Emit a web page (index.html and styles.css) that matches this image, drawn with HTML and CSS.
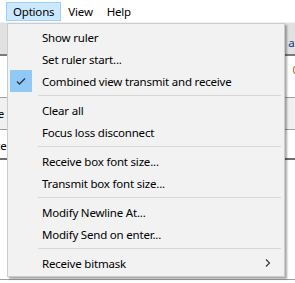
FILE: index.html
```html
<!DOCTYPE html>
<html>
<head>
<meta charset="utf-8">
<link rel="stylesheet" href="styles.css">
</head>
<body>
<div class="app">
  <div class="menubar">
    <span class="mb-item active">Options</span>
    <span class="mb-item">View</span>
    <span class="mb-item">Help</span>
  </div>
  <div class="workspace">
    <div class="row r1"><span class="r-right">ar</span></div>
    <div class="row r2"><span class="r-right zero">0</span></div>
    <div class="row r3"><span class="r-left">le</span></div>
    <div class="row r4"><span class="r-left">ce</span></div>
    <div class="row r5"></div>
  </div>

  <div class="popup">
    <div class="item"><span class="label">Show ruler</span></div>
    <div class="item"><span class="label">Set ruler start...</span></div>
    <div class="item checked"><span class="check"><svg width="22" height="22" viewBox="0 0 22 22"><path d="M7 11.5 L9.5 14 L15 8.5" fill="none" stroke="#333" stroke-width="1.3"/></svg></span><span class="label">Combined view transmit and receive</span></div>
    <div class="sep"></div>
    <div class="item"><span class="label">Clear all</span></div>
    <div class="item"><span class="label">Focus loss disconnect</span></div>
    <div class="sep"></div>
    <div class="item"><span class="label">Receive box font size...</span></div>
    <div class="item"><span class="label">Transmit box font size...</span></div>
    <div class="sep"></div>
    <div class="item"><span class="label">Modify Newline At...</span></div>
    <div class="item"><span class="label">Modify Send on enter...</span></div>
    <div class="sep"></div>
    <div class="item"><span class="label">Receive bitmask</span><span class="arrow"><svg width="8" height="10" viewBox="0 0 8 10"><path d="M2 1.5 L5.5 5 L2 8.5" fill="none" stroke="#333" stroke-width="1.1"/></svg></span></div>
  </div>
</div>
</body>
</html>
```
FILE: styles.css
```css
* { box-sizing: border-box; }
html, body { margin: 0; padding: 0; }
body {
  width: 295px;
  height: 283px;
  overflow: hidden;
  background: #fff;
  font-family: "Noto Sans", "Segoe UI", sans-serif;
  font-size: 11.5px;
  letter-spacing: -0.2px;
  color: #000;
}
.app { position: relative; width: 295px; height: 283px; }
.menubar {
  height: 23px;
  display: flex;
  align-items: center;
  padding: 0 0 0 6px;
  background: #fff;
  border-bottom: 1px solid #f0f0f0;
}
.mb-item {
  height: 19px;
  line-height: 17px;
  padding: 0 6px;
  border: 1px solid transparent;
}
.mb-item.active { background: #cce8ff; border-color: #99d1ff; }

.workspace { display: flex; flex-direction: column; }
.row { position: relative; border-bottom: 1px solid #a0a0a0; }
.r1 { height: 33px; background: #e1e1e1; border-bottom: 2px solid #7a7a7a; }
.r2 { height: 42px; background: #fff; }
.r3 { height: 32px; background: #f0f0f0; }
.r4 { height: 30px; background: #fff; border-bottom: 2px solid #6d6d6d; }
.r5 { height: 120px; background: #fff; }
.r-right { position: absolute; right: -4px; top: 12px; color: #0a3a8a; }
.zero { color: #b06000; top: 6px; }
.r-left { position: absolute; left: -5px; top: 8px; }

.popup {
  position: absolute;
  left: 7px;
  top: 23px;
  width: 278px;
  background: #f2f2f2;
  border: 1px solid #cccccc;
  padding: 2px;
  box-shadow: 2px 2px 2px rgba(0,0,0,0.35);
}
.item {
  height: 22px;
  display: flex;
  align-items: center;
  position: relative;
  padding-left: 32px;
}
.label { white-space: nowrap; }
.check {
  position: absolute;
  left: 0;
  top: 0;
  width: 22px;
  height: 22px;
  background: #90c8f6;
}
.check svg { display: block; }
.arrow { position: absolute; right: 10px; top: 6px; }
.arrow svg { display: block; }
.sep {
  height: 7px;
  display: flex;
  align-items: center;
  margin-left: 28px;
  margin-right: 1px;
}
.sep::before { content: ""; display: block; height: 1px; width: 100%; background: #d7d7d7; }
```
